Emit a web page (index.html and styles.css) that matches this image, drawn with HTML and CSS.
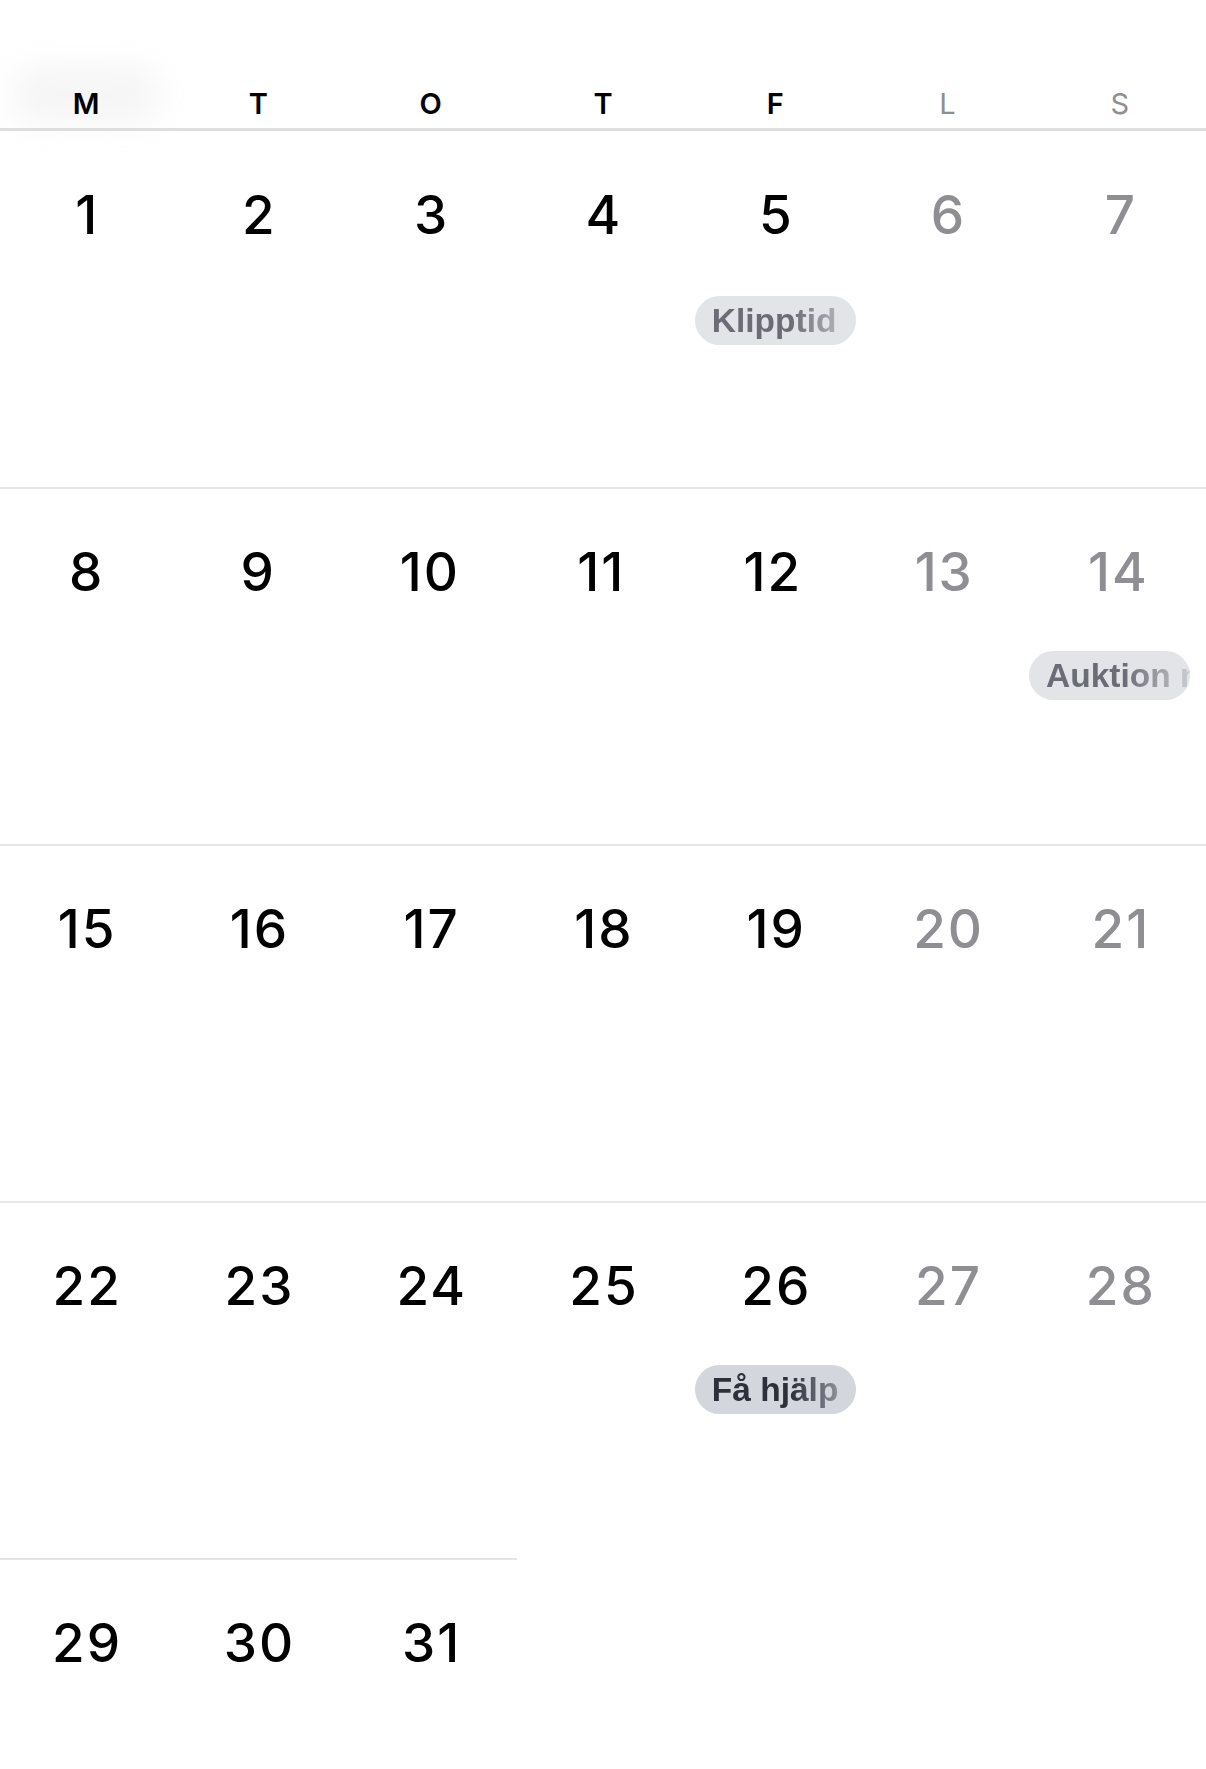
FILE: index.html
```html
<!DOCTYPE html>
<html lang="sv">
<head>
<meta charset="utf-8">
<title>Kalender</title>
<link rel="stylesheet" href="styles.css">
</head>
<body>
<div class="calendar">
  <div class="glow"></div>
  <div class="weekdays">
    <span class="wd">M</span>
    <span class="wd">T</span>
    <span class="wd">O</span>
    <span class="wd">T</span>
    <span class="wd">F</span>
    <span class="wd wd--weekend">L</span>
    <span class="wd wd--weekend">S</span>
  </div>

  <div class="week week--first">
    <div class="day"><span class="num">1</span></div>
    <div class="day"><span class="num">2</span></div>
    <div class="day"><span class="num">3</span></div>
    <div class="day"><span class="num">4</span></div>
    <div class="day"><span class="num">5</span><span class="pill"><span class="pill-text">Klipptid</span></span></div>
    <div class="day day--weekend"><span class="num">6</span></div>
    <div class="day day--weekend"><span class="num">7</span></div>
  </div>

  <div class="week">
    <div class="day"><span class="num">8</span></div>
    <div class="day"><span class="num">9</span></div>
    <div class="day"><span class="num">10</span></div>
    <div class="day"><span class="num">11</span></div>
    <div class="day"><span class="num">12</span></div>
    <div class="day day--weekend"><span class="num">13</span></div>
    <div class="day day--weekend"><span class="num">14</span><span class="pill pill--end"><span class="pill-text">Auktion med vänner</span></span></div>
  </div>

  <div class="week">
    <div class="day"><span class="num">15</span></div>
    <div class="day"><span class="num">16</span></div>
    <div class="day"><span class="num">17</span></div>
    <div class="day"><span class="num">18</span></div>
    <div class="day"><span class="num">19</span></div>
    <div class="day day--weekend"><span class="num">20</span></div>
    <div class="day day--weekend"><span class="num">21</span></div>
  </div>

  <div class="week">
    <div class="day"><span class="num">22</span></div>
    <div class="day"><span class="num">23</span></div>
    <div class="day"><span class="num">24</span></div>
    <div class="day"><span class="num">25</span></div>
    <div class="day"><span class="num">26</span><span class="pill pill--strong"><span class="pill-text">Få hjälp</span></span></div>
    <div class="day day--weekend"><span class="num">27</span></div>
    <div class="day day--weekend"><span class="num">28</span></div>
  </div>

  <div class="week">
    <div class="day"><span class="num">29</span></div>
    <div class="day"><span class="num">30</span></div>
    <div class="day"><span class="num">31</span></div>
  </div>
</div>
</body>
</html>
```

FILE: styles.css
```css
html, body {
  margin: 0;
  padding: 0;
  background: #ffffff;
}

body {
  font-family: Inter, "Liberation Sans", sans-serif;
  color: #000;
  overflow: hidden;
}

.calendar {
  position: relative;
  width: 1206px;
}

.glow {
  position: absolute;
  left: 14px;
  top: 66px;
  width: 145px;
  height: 58px;
  border-radius: 24px;
  background: #ececec;
  filter: blur(15px);
  opacity: 0.5;
}

.weekdays {
  position: relative;
  display: grid;
  grid-template-columns: repeat(7, 1fr);
  align-items: end;
  height: 131px;
  box-sizing: border-box;
  padding-bottom: 6px;
  border-bottom: 3px solid #dedede;
}

.wd {
  text-align: center;
  font-size: 29px;
  line-height: 36px;
  font-weight: 600;
  color: #000;
}

.wd--weekend {
  color: #8e8e93;
  font-weight: 400;
}

.week {
  display: grid;
  grid-template-columns: repeat(7, 1fr);
}

.day {
  display: flex;
  flex-direction: column;
  align-items: center;
  height: 357px;
  box-sizing: border-box;
  padding-top: 53px;
  border-top: 2px solid #e6e6e6;
}

.week--first .day {
  border-top: 0;
  padding-top: 54px;
  height: 356px;
}

.week--first .pill {
  margin-top: 51px;
}

.num {
  font-size: 53px;
  line-height: 60px;
  font-weight: 550;
  letter-spacing: 2px;
  margin-right: -2px;
}

.day--weekend .num {
  color: #8e8e93;
}

.pill {
  display: block;
  width: 161px;
  height: 49px;
  margin-top: 49px;
  box-sizing: border-box;
  padding-left: 17px;
  border-radius: 25px;
  background: #e3e4e8;
  color: #6a6d75;
  overflow: hidden;
}

.pill--end {
  align-self: flex-end;
  margin-right: 16px;
}

.pill--strong {
  background: #d3d6dd;
  color: #2b303b;
}

.pill-text {
  display: block;
  font-family: "Liberation Sans", Arial, sans-serif;
  font-weight: 700;
  font-size: 33.5px;
  line-height: 49px;
  white-space: nowrap;
  overflow: hidden;
  -webkit-mask-image: linear-gradient(to right, #000 55%, rgba(0, 0, 0, 0.2) 100%);
  mask-image: linear-gradient(to right, #000 55%, rgba(0, 0, 0, 0.2) 100%);
}
```
